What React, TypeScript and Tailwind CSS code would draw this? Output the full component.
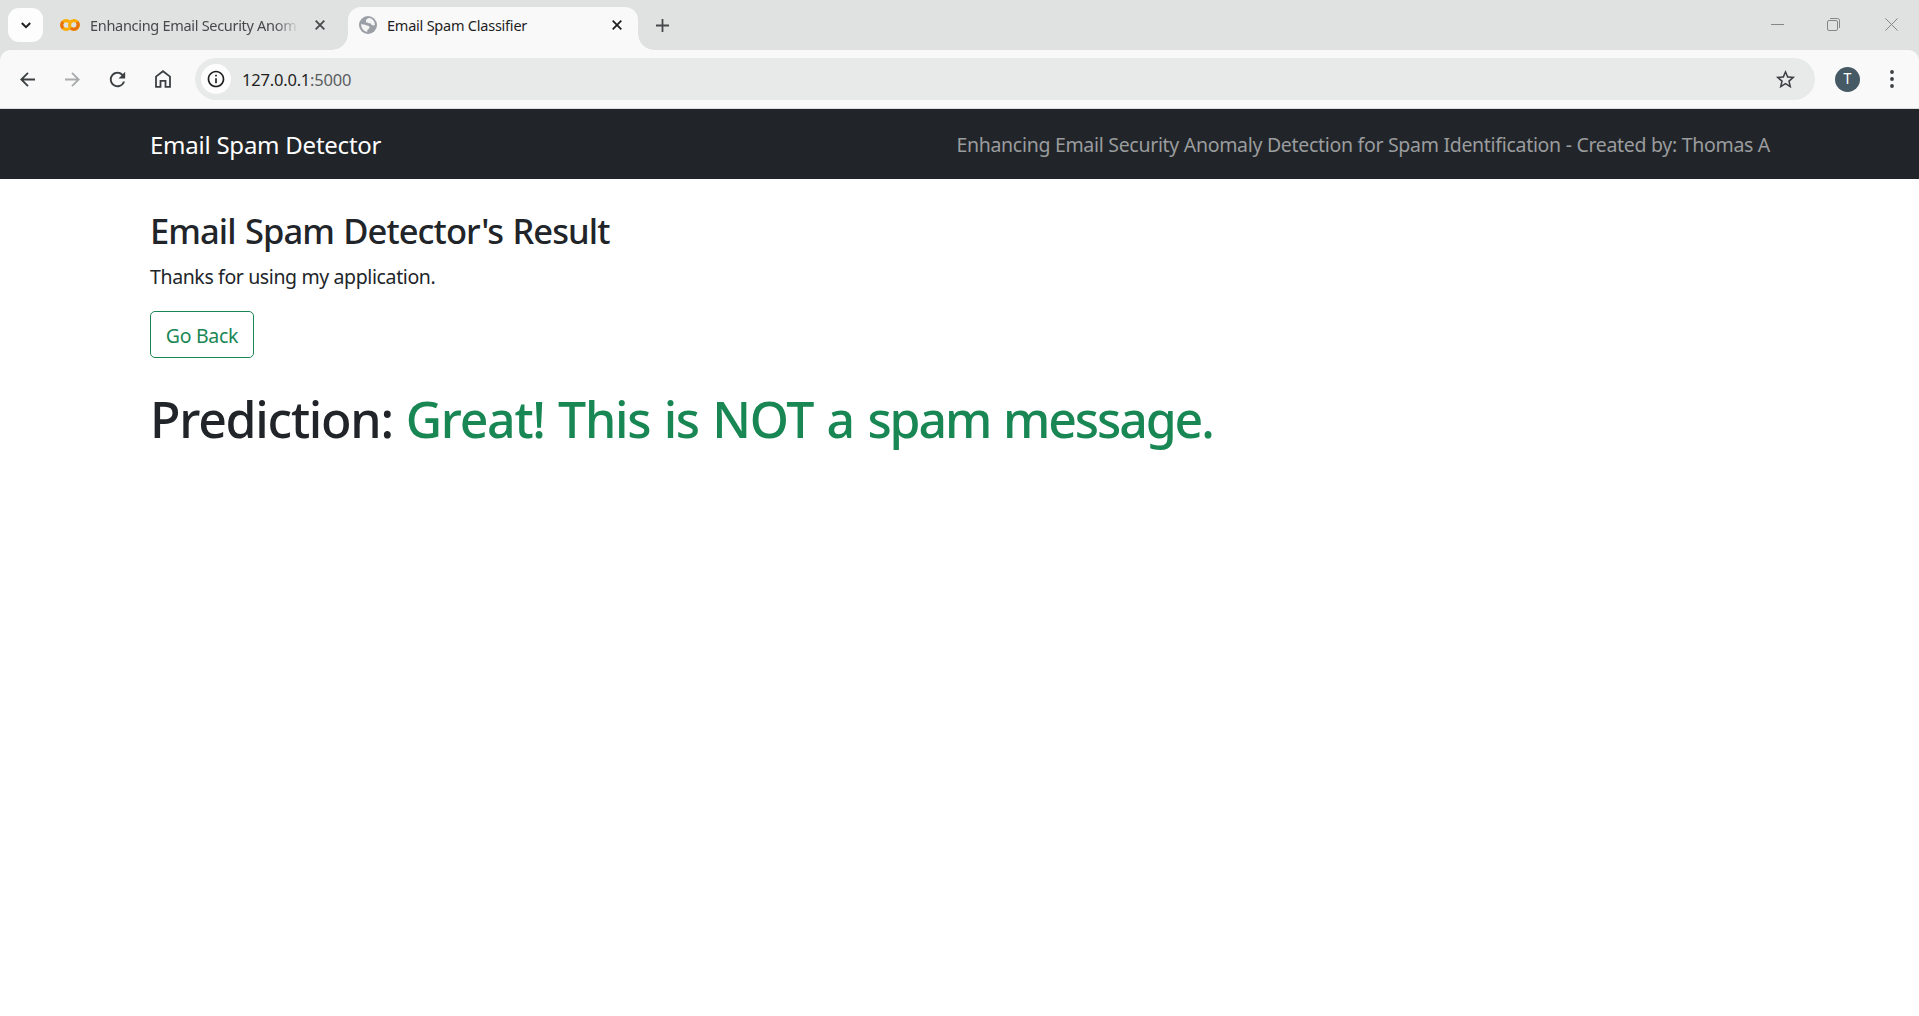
import type { ReactNode } from 'react'
import { MdInfoOutline, MdRefresh, MdStarBorder } from 'react-icons/md'

function Cross({ className }: { className: string }) {
  return (
    <svg viewBox="0 0 10 10" className={className} fill="none" stroke="currentColor">
      <path d="M.7.7l8.6 8.6M9.3.7L.7 9.3" strokeWidth="1.8" />
    </svg>
  )
}

function ColabLogo() {
  return (
    <svg viewBox="0 0 20 12" className="h-3 w-5 shrink-0" fill="none" strokeWidth="3.1">
      <path d="M9.2 2.9A4.4 4.4 0 1 0 9.2 9.1" stroke="#f9ab00" />
      <path d="M3 2.9A4.4 4.4 0 0 0 3 9.1" stroke="#e8710a" />
      <circle cx="14" cy="6" r="4.4" stroke="#f9ab00" />
      <path d="M17.1 2.9A4.4 4.4 0 0 1 10.9 9.1" stroke="#e8710a" />
    </svg>
  )
}

function Globe() {
  return (
    <svg viewBox="0 0 18 18" className="mx-0.5 size-[18px] shrink-0">
      <circle cx="9" cy="9" r="9" fill="#9aa0a6" />
      <g fill="#f4f5f5">
        <path d="M7 4.6C7.4 3.2 8.8 2.4 10.4 2.1c3.2.6 5.4 3.3 5.5 6.7-.9.7-2.1.8-3.1.3-.8-.5-.7-1.5-1.7-1.8-1.2-.3-2.9.1-3.7-.8C7 6 6.8 5.3 7 4.6z" />
        <path d="M2.1 8.3c1.5-.3 3.1 0 4.4.8 1 .6 2.2.5 3.2 1 .9.5 1 1.6.4 2.4-.5.7-1.4.8-1.7 1.6-.2.6.1 1.3-.3 1.8C4.7 15.3 2.2 12.3 2.1 8.3z" />
      </g>
    </svg>
  )
}

function Arrow({ className }: { className: string }) {
  return (
    <svg viewBox="0 0 15 15" className={className} fill="none" stroke="currentColor" strokeWidth="1.8">
      <path d="M15 7.5H1.5M8 .8L1.3 7.5L8 14.2" />
    </svg>
  )
}

function ToolButton({ children }: { children: ReactNode }) {
  return <button className="flex size-[45px] items-center justify-center text-[#3c4043]">{children}</button>
}

function TabStrip() {
  return (
    <div className="flex h-[50px] items-start bg-[#e0e2e1]">
      <button className="mt-2 ml-2 flex h-[34px] w-[35px] items-center justify-center rounded-[11px] bg-[#fdfdfd]">
        <svg viewBox="0 0 10 7" className="h-[7px] w-2.5" fill="none" stroke="#1f1f1f" strokeWidth="2">
          <path d="M.8 1L5 5.2L9.2 1" />
        </svg>
      </button>
      <div className="flex h-[50px] w-[305px] items-center pl-[17px]">
        <ColabLogo />
        <span className="ml-[10px] w-[209px] overflow-hidden pb-px text-[14.5px] leading-6 tracking-[-0.3px] whitespace-nowrap text-[#45494c] [mask-image:linear-gradient(to_right,#000_88%,transparent)]">
          Enhancing Email Security Anom
        </span>
        <Cross className="ml-4 size-2.5 text-[#45494c]" />
      </div>
      <div className="relative mt-[7px] flex h-[43px] w-[290px] items-center rounded-t-[13px] bg-[#f9f9f9] pb-[7px] pl-[9px]">
        <span className="absolute bottom-0 -left-4 size-4 bg-[radial-gradient(circle_at_0_0,transparent_15.5px,#f9f9f9_16px)]" />
        <span className="absolute -right-4 bottom-0 size-4 bg-[radial-gradient(circle_at_100%_0,transparent_15.5px,#f9f9f9_16px)]" />
        <Globe />
        <span className="ml-2 w-[225px] pb-px text-[14.5px] leading-6 tracking-[-0.23px] text-[#1f1f1f]">
          Email Spam Classifier
        </span>
        <Cross className="size-2.5 text-[#1f1f1f]" />
      </div>
      <svg viewBox="0 0 13 13" className="mt-[18.5px] ml-[18px] size-[13px]" stroke="#45494c" strokeWidth="1.8">
        <path d="M6.5 0v13M0 6.5h13" />
      </svg>
      <div className="mt-[18px] mr-[21px] ml-auto flex gap-[43px] text-[#858786]">
        <svg viewBox="0 0 13 13" className="size-[13px]" stroke="currentColor">
          <path d="M0 6.5h13" />
        </svg>
        <svg viewBox="0 0 13 13" className="size-[13px]" fill="none" stroke="currentColor">
          <rect x=".5" y="2.5" width="10" height="10" rx="1.5" />
          <path d="M3 .5h7.5a2 2 0 0 1 2 2V10" />
        </svg>
        <svg viewBox="0 0 13 13" className="ml-0.5 size-[13px]" stroke="currentColor">
          <path d="M.4.4l12.2 12.2M12.6.4L.4 12.6" />
        </svg>
      </div>
    </div>
  )
}

function Toolbar() {
  return (
    <div className="bg-[#e0e2e1]">
      <div className="flex h-[59px] items-center rounded-t-[11px] border-b border-[#dcdedd] bg-[#f9f9f9] pl-[5px]">
        <ToolButton>
          <Arrow className="size-[15px]" />
        </ToolButton>
        <ToolButton>
          <Arrow className="size-[15px] rotate-180 text-[#a9abac]" />
        </ToolButton>
        <ToolButton>
          <MdRefresh className="size-[23px]" />
        </ToolButton>
        <ToolButton>
          <svg viewBox="0 0 16 18" className="h-[18px] w-4" fill="none" stroke="currentColor" strokeWidth="1.8">
            <path d="M1 16.8V6.6L8 1.2l7 5.4v10.2H10.5v-6H5.5v6z" />
          </svg>
        </ToolButton>
        <div className="ml-[10px] flex h-[42px] w-[1620px] items-center rounded-full bg-[#e8eae9] pr-[18px] pl-[6px]">
          <span className="flex size-[30px] items-center justify-center rounded-full bg-[#fdfdfd]">
            <MdInfoOutline className="size-5 text-[#1f1f1f]" />
          </span>
          <span className="ml-[11px] pt-px text-[16.5px] leading-6 tracking-[-0.2px] text-[#1f1f1f]">
            127.0.0.1<span className="text-[#5a5d5f]">:5000</span>
          </span>
          <MdStarBorder className="ml-auto size-[23px] text-[#3c4043]" />
        </div>
        <span className="ml-5 flex size-[25px] items-center justify-center rounded-full bg-[#455a64] font-[Roboto,sans-serif] text-[14px] leading-none text-white">
          T
        </span>
        <svg viewBox="0 0 4 18" className="ml-[30px] h-[18px] w-1" fill="#3c4043">
          <circle cx="2" cy="2" r="1.9" />
          <circle cx="2" cy="9" r="1.9" />
          <circle cx="2" cy="16" r="1.9" />
        </svg>
      </div>
    </div>
  )
}

export default function App() {
  return (
    <div className="min-h-screen bg-white font-['Noto_Sans','Open_Sans',sans-serif] text-[#212529]">
      <TabStrip />
      <Toolbar />
      <nav className="flex h-[70px] items-center justify-between bg-[#212529] pr-[149px] pl-[150px]">
        <a className="pt-px text-2xl leading-9 tracking-[-0.24px] text-white">Email Spam Detector</a>
        <span className="pt-px text-[19.5px] leading-[30px] tracking-[-0.3px] text-[#9a9c9e]">
          Enhancing Email Security Anomaly Detection for Spam Identification - Created by: Thomas A
        </span>
      </nav>
      <main className="px-[150px] pt-[31px]">
        <h3 className="mb-[10px] text-[34.5px] leading-[42px] font-medium tracking-[-0.92px] [word-spacing:1.2px]">
          Email Spam Detector's Result
        </h3>
        <p className="mb-[19px] text-[19.5px] leading-[30px] tracking-[-0.38px]">Thanks for using my application.</p>
        <button className="flex h-[47px] w-[104px] items-center justify-center rounded-[5px] border border-[#198754] pt-[2px] text-[19.5px] leading-[30px] tracking-[-0.3px] text-[#198754]">
          Go Back
        </button>
        <h1 className="mt-[31px] flex gap-[13px] text-[50px] leading-[60px] font-medium whitespace-nowrap">
          <span className="tracking-[-1.25px]">Prediction:</span>
          <span className="tracking-[-1.3px] text-[#198754] [word-spacing:1.8px]">
            Great! This is NOT a <span className="tracking-[-2.1px]">spam message.</span>
          </span>
        </h1>
      </main>
    </div>
  )
}
